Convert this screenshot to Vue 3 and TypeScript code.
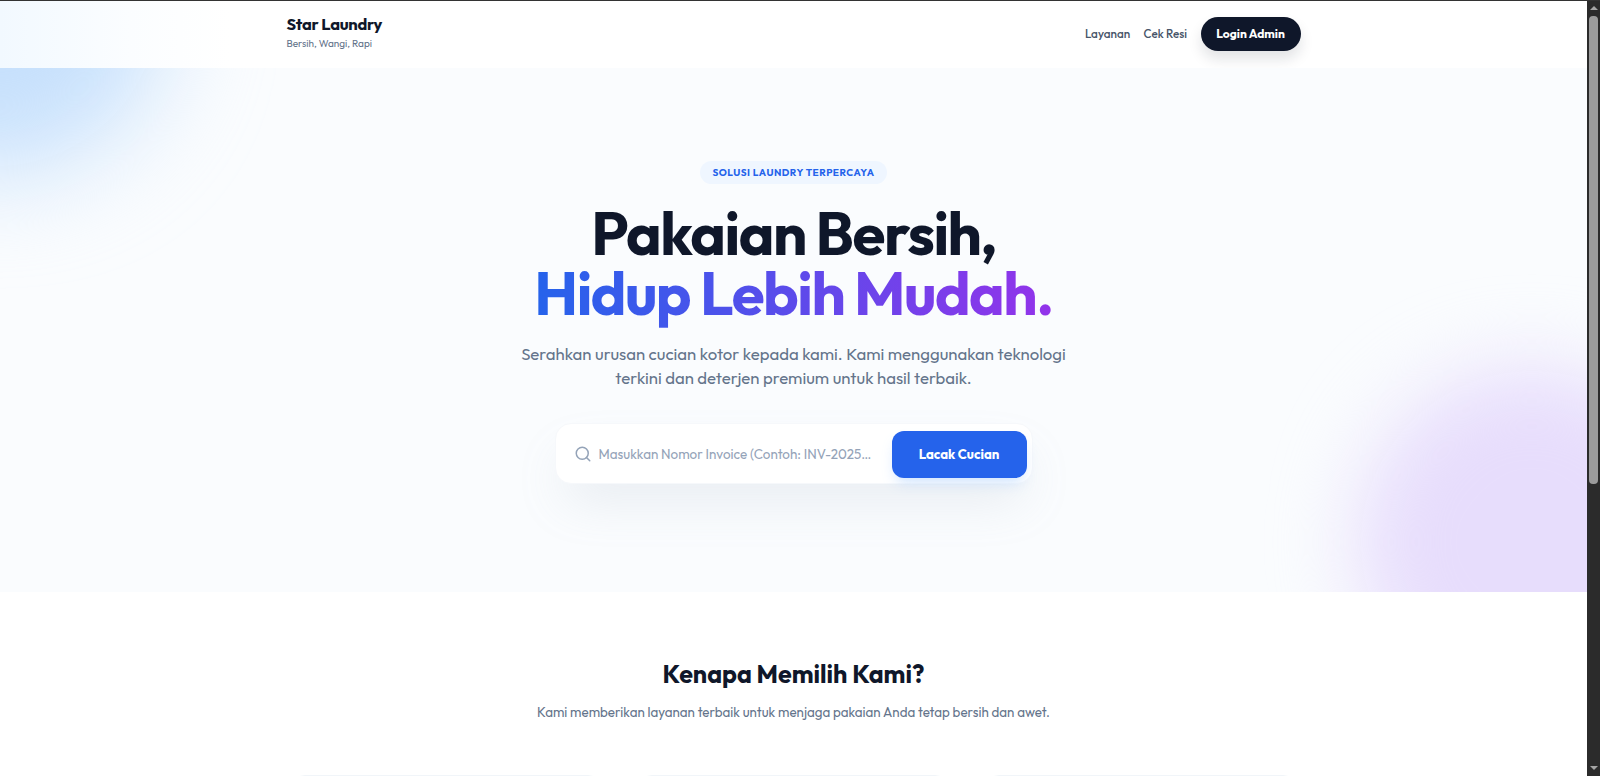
<script setup lang="ts">
const navLinks: string[] = ['Layanan', 'Cek Resi']
</script>

<template>
  <div class="shell">
    <div class="top-line"></div>
    <div class="viewport">
      <div class="page">
        <header class="nav">
          <div class="container nav-row">
            <div class="brand">
              <div class="brand-name">Star Laundry</div>
              <div class="brand-sub">Bersih, Wangi, Rapi</div>
            </div>
            <nav class="links">
              <a v-for="l in navLinks" :key="l" class="link">{{ l }}</a>
              <button class="login">Login Admin</button>
            </nav>
          </div>
        </header>
        <section class="hero">
          <div class="blob blob-blue"></div>
          <div class="blob blob-purple"></div>
          <div class="hero-inner">
            <span class="badge">SOLUSI LAUNDRY TERPERCAYA</span>
            <h1 class="title">Pakaian Bersih,<br /><span class="grad">Hidup Lebih Mudah.</span></h1>
            <p class="lead">Serahkan urusan cucian kotor kepada kami. Kami menggunakan teknologi terkini dan deterjen premium untuk hasil terbaik.</p>
            <form class="search" @submit.prevent>
              <svg class="search-icon" viewBox="0 0 24 24" fill="none" stroke="currentColor" stroke-width="2" stroke-linecap="round" stroke-linejoin="round"><circle cx="11" cy="11" r="8" /><path d="m21 21-4.35-4.35" /></svg>
              <input class="search-input" type="text" placeholder="Masukkan Nomor Invoice (Contoh: INV-2025-001)" />
              <button class="track" type="submit">Lacak Cucian</button>
            </form>
          </div>
        </section>
        <section class="features">
          <div class="container">
            <h2 class="f-title">Kenapa Memilih Kami?</h2>
            <p class="f-sub">Kami memberikan layanan terbaik untuk menjaga pakaian Anda tetap bersih dan awet.</p>
            <div class="cards">
              <div v-for="n in 3" :key="n" class="card"></div>
            </div>
          </div>
        </section>
      </div>
      <aside class="scrollbar" aria-hidden="true">
        <span class="arrow arrow-up"></span>
        <span class="thumb"></span>
        <span class="arrow arrow-down"></span>
      </aside>
    </div>
  </div>
</template>

<style>
html, body { margin: 0; background: #fff; overflow: hidden; }
</style>

<style scoped>
.shell { height: 100vh; display: flex; flex-direction: column; overflow: hidden; font-family: "Outfit", "Lato", "Noto Sans", sans-serif; color: #0f172a; }
.top-line { height: 1px; flex: none; background: #333; }
.viewport { flex: 1; min-height: 0; display: flex; }
.page { flex: 1; min-width: 0; overflow: hidden; background: #fff; }
.scrollbar { flex: none; width: 13px; background: #2b2b2b; display: flex; flex-direction: column; align-items: center; box-sizing: border-box; padding: 5px 0; }
.thumb { width: 9px; height: 468px; margin-top: 6px; border-radius: 4px; background: #9b9b9b; }
.arrow { width: 0; height: 0; border-left: 4px solid transparent; border-right: 4px solid transparent; }
.arrow-up { border-bottom: 4px solid #a5a5a5; }
.arrow-down { border-top: 4px solid #a5a5a5; margin-top: auto; margin-bottom: 1px; }
.container { width: 1014px; margin: 0 auto; }
.nav { height: 67px; display: flex; align-items: center; background: linear-gradient(90deg, #f2f9ff 0, #fbfdff 130px, #fff 230px); }
.nav-row { display: flex; align-items: center; justify-content: space-between; }
.brand { margin-top: -4px; }
.brand-name { font-size: 16.5px; font-weight: 700; line-height: 20px; letter-spacing: -.3px; color: #0f172a; }
.brand-sub { font-size: 10px; line-height: 14px; color: #64748b; margin-top: 3px; }
.links { display: flex; align-items: center; gap: 13.5px; margin-top: -2px; }
.link { font-size: 11.7px; font-weight: 500; color: #475569; }
.login { height: 34px; width: 100px; border: 0; border-radius: 17px; background: #0f172a; color: #fff; font: 700 12px "Outfit", "Lato", sans-serif; box-shadow: 0 8px 14px rgba(15,23,42,.12); }
.hero { position: relative; overflow: hidden; height: 524px; background: #fafcfe; }
.blob { position: absolute; border-radius: 50%; }
.blob-blue { left: -174px; top: -235px; width: 340px; height: 340px; background: #c6e0fc; filter: blur(50px); }
.blob-purple { right: -120px; bottom: -125px; width: 350px; height: 350px; background: #e7ddfc; filter: blur(40px); }
.hero-inner { position: relative; display: flex; flex-direction: column; align-items: center; padding-top: 93px; }
.badge { height: 23px; line-height: 23px; padding: 0 12px; border-radius: 12px; background: #eff6ff; color: #2563eb; font-size: 10px; font-weight: 700; letter-spacing: .5px; }
.title { margin: 19px 0 0; text-align: center; font-size: 60px; line-height: 60px; font-weight: 700; letter-spacing: -1.5px; color: #0f172a; }
.grad { background: linear-gradient(90deg, #2563eb, #9333ea); -webkit-background-clip: text; background-clip: text; color: transparent; }
.lead { margin: 18.5px 0 0; width: 576px; text-align: center; font-size: 16.75px; line-height: 24px; font-weight: 400; color: #64748b; }
.search { margin-top: 33.5px; width: 478px; height: 61px; padding: 6px 5px 6px 6px; box-sizing: border-box; display: flex; align-items: center; background: #fff; border: 1px solid #f6f8fb; border-radius: 16px; box-shadow: 0 25px 50px -12px rgba(148,163,184,.22); }
.search-icon { width: 18px; height: 18px; margin-left: 12.5px; color: #94a3b8; flex: none; }
.search-input { flex: 1; min-width: 0; border: 0; outline: 0; background: transparent; padding: 0 18px 0 6.5px; font: 400 13.4px "Outfit", "Lato", sans-serif; text-overflow: ellipsis; }
.search-input::placeholder { color: #94a3b8; opacity: 1; }
.track { width: 135px; height: 47px; flex: none; margin-top: 1px; border: 0; border-radius: 12px; background: #2563eb; color: #fff; font: 700 13.2px "Outfit", "Lato", sans-serif; box-shadow: 0 8px 14px -4px rgba(191,219,254,.8); }
.features { padding-top: 66px; height: 300px; }
.f-title { margin: 0; text-align: center; font-size: 25px; line-height: 32px; font-weight: 700; color: #0f172a; }
.f-sub { margin: 12px 0 0; text-align: center; font-size: 13.35px; line-height: 20px; font-weight: 400; color: #64748b; }
.cards { margin-top: 53px; padding: 0 2px; display: grid; grid-template-columns: repeat(3, 1fr); gap: 32px; }
.card { height: 220px; border: 1px solid #f1f5f9; border-radius: 16px; background: #fff; box-sizing: border-box; }
</style>
